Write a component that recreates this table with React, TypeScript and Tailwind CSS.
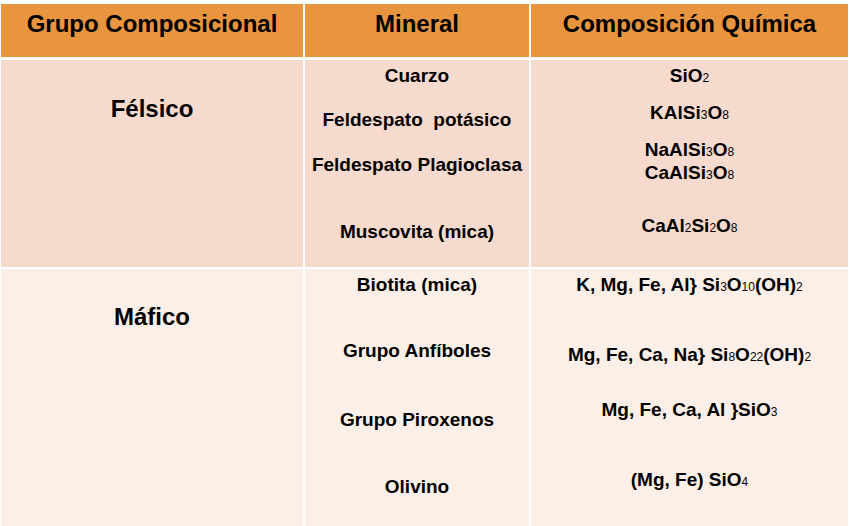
import React from "react";

const Sub = ({ children }: { children: React.ReactNode }) => (
  <span className="text-[12px] leading-none font-normal">{children}</span>
);

export default function App() {
  return (
    <div className="w-[852px] h-[526px] bg-white overflow-hidden font-['Liberation_Sans',Arial,sans-serif] font-bold text-black">
      <div className="pt-[4px] pl-[1px] w-[848px]">
        {/* Header */}
        <div className="grid grid-cols-[302px_224px_317px] gap-x-[2px] h-[53px]">
          <div className="bg-[#e9943f] text-center text-[24px] leading-[28px] pt-[6px]">Grupo Composicional</div>
          <div className="bg-[#e9943f] text-center text-[24px] leading-[28px] pt-[6px]">Mineral</div>
          <div className="bg-[#e9943f] text-center text-[24px] leading-[28px] pt-[6px]">Composición Química</div>
        </div>

        {/* Félsico */}
        <div className="grid grid-cols-[302px_224px_317px] gap-x-[2px] h-[207px] mt-[3px]">
          <div className="bg-[#f6dacd] text-center text-[24px] leading-[28px] pt-[35px]">Félsico</div>
          <div className="bg-[#f6dacd] text-center text-[19px] leading-[20px] pt-[6px] flex flex-col">
            <div className="h-[20px]">Cuarzo</div>
            <div className="h-[20px] mt-[24px] whitespace-pre">Feldespato  potásico</div>
            <div className="h-[20px] mt-[25px]">Feldespato Plagioclasa</div>
            <div className="h-[20px] mt-[47px]">Muscovita (mica)</div>
          </div>
          <div className="bg-[#f6dacd] text-center text-[19px] leading-[20px] pt-[6px] flex flex-col">
            <div className="h-[20px]">SiO<Sub>2</Sub></div>
            <div className="h-[20px] mt-[17px]">KAlSi<Sub>3</Sub>O<Sub>8</Sub></div>
            <div className="h-[20px] mt-[17px]">NaAlSi<Sub>3</Sub>O<Sub>8</Sub></div>
            <div className="h-[20px] mt-[3px]">CaAlSi<Sub>3</Sub>O<Sub>8</Sub></div>
            <div className="h-[20px] mt-[33px]">CaAl<Sub>2</Sub>Si<Sub>2</Sub>O<Sub>8</Sub></div>
          </div>
        </div>

        {/* Máfico */}
        <div className="grid grid-cols-[302px_224px_317px] gap-x-[2px] h-[260px] mt-[2px]">
          <div className="bg-[#fcefe8] text-center text-[24px] leading-[28px] pt-[34px]">Máfico</div>
          <div className="bg-[#fcefe8] text-center text-[19px] leading-[20px] pt-[6px] flex flex-col">
            <div className="h-[20px]">Biotita (mica)</div>
            <div className="h-[20px] mt-[46px]">Grupo Anfíboles</div>
            <div className="h-[20px] mt-[49px]">Grupo Piroxenos</div>
            <div className="h-[20px] mt-[47px]">Olivino</div>
          </div>
          <div className="bg-[#fcefe8] text-center text-[19px] leading-[20px] pt-[6px] flex flex-col">
            <div className="h-[20px]">{"K, Mg, Fe, Al} Si"}<Sub>3</Sub>O<Sub>10</Sub>(OH)<Sub>2</Sub></div>
            <div className="h-[20px] mt-[50px]">{"Mg, Fe, Ca, Na} Si"}<Sub>8</Sub>O<Sub>22</Sub>(OH)<Sub>2</Sub></div>
            <div className="h-[20px] mt-[35px]">{"Mg, Fe, Ca, Al }SiO"}<Sub>3</Sub></div>
            <div className="h-[20px] mt-[50px]">(Mg, Fe) SiO<Sub>4</Sub></div>
          </div>
        </div>
      </div>
    </div>
  );
}
